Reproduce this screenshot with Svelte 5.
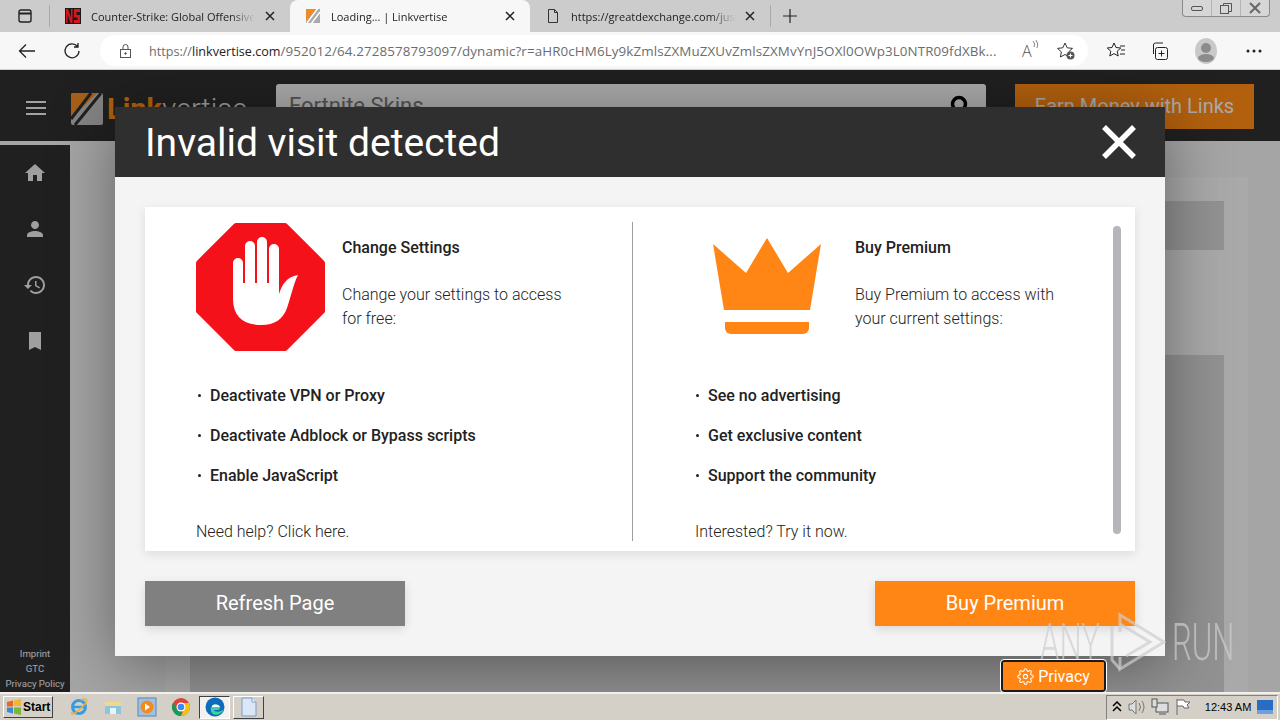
<script>
const tabs = [
  { title: 'Counter-Strike: Global Offensive', icon: 'ns' },
  { title: 'Loading... | Linkvertise', icon: 'lv', active: true },
  { title: 'https://greatdexchange.com/just-a-moment', icon: 'doc' }
];
const sideIcons = [
  'M10 20v-6h4v6h5v-8h3L12 3 2 12h3v8z',
  'M12 12c2.21 0 4-1.79 4-4s-1.79-4-4-4-4 1.79-4 4 1.79 4 4 4zm0 2c-2.67 0-8 1.34-8 4v2h16v-2c0-2.66-5.33-4-8-4z',
  'M13 3c-4.97 0-9 4.03-9 9H1l3.89 3.89.07.14L9 12H6c0-3.87 3.13-7 7-7s7 3.13 7 7-3.13 7-7 7c-1.93 0-3.68-.79-4.94-2.06l-1.42 1.42C8.27 19.99 10.51 21 13 21c4.97 0 9-4.03 9-9s-4.03-9-9-9zm-1 5v5l4.28 2.54.72-1.21-3.5-2.08V8H12z',
  'M6 3h12v18l-6-3-6 3z'
];
const leftItems = ['Deactivate VPN or Proxy', 'Deactivate Adblock or Bypass scripts', 'Enable JavaScript'];
const rightItems = ['See no advertising', 'Get exclusive content', 'Support the community'];
</script>

<div class="screen">
  <div class="tabstrip">
    <div class="winicon"><svg width="16" height="16" viewBox="0 0 16 16" fill="none" stroke="#222" stroke-width="1.4"><rect x="2" y="2" width="12" height="12" rx="2"/><path d="M2 5.5h12" stroke-width="2"/></svg></div>
    <div class="sep"></div>
    {#each tabs as tab}
      <div class="tab" class:active={tab.active}>
        {#if tab.icon === 'ns'}
          <svg class="favicon" width="16" height="16" viewBox="0 0 16 16"><rect width="16" height="16" fill="#1a1a1a"/><path d="M1 15V1h2l3 9V1h1.500v14H5.500L2.500 6v9zM9 1h6v3h-3.500v3H15v8H9v-3h3.500V9.500H9z" fill="#d8141c"/></svg>
        {:else if tab.icon === 'lv'}
          <svg class="favicon" width="16" height="16" viewBox="0 0 32 32"><rect x="2" y="2" width="28" height="28" fill="#a9a9a9"/><path d="M2 2h22L2 26z" fill="#f08a24"/><path d="M26 0L4 30M30 8L12 32" stroke="#fff" stroke-width="3"/></svg>
        {:else}
          <svg class="favicon" width="16" height="16" viewBox="0 0 16 16" fill="none" stroke="#333"><path d="M3.500 1.500h6l3 3v10h-9zM9.500 1.500v3h3"/></svg>
        {/if}
        <span class="tabtitle">{tab.title}</span>
        <svg class="tabclose" width="10" height="10" viewBox="0 0 10 10" stroke="#222" stroke-width="1.500"><path d="M1 1l8 8M9 1l-8 8"/></svg>
      </div>
    {/each}
    <div class="sep"></div>
    <svg class="plus" width="16" height="16" viewBox="0 0 16 16" stroke="#222" stroke-width="1.200"><path d="M8 1v14M1 8h14"/></svg>
    <div class="wincontrols">
      <span><svg width="14" height="10" viewBox="0 0 14 10" fill="none" stroke="#555"><rect x="1.500" y="3.500" width="11" height="4" rx="1.500"/></svg></span>
      <span><svg width="14" height="13" viewBox="0 0 14 13" fill="none" stroke="#555"><rect x="1.500" y="3.500" width="8" height="8"/><path d="M4.500 3.500v-2h8v8h-3"/></svg></span>
      <span><svg width="14" height="12" viewBox="0 0 14 12" stroke="#666" stroke-width="2"><path d="M2 1l10 10M12 1L2 11"/></svg></span>
    </div>
  </div>

  <div class="toolbar">
    <svg class="back" width="18" height="16" viewBox="0 0 18 16" fill="none" stroke="#222" stroke-width="1.300"><path d="M17 8H1.500M8 1.500L1.500 8 8 14.500"/></svg>
    <svg class="reload" width="18" height="18" viewBox="0 0 18 18" fill="none" stroke="#222" stroke-width="1.300"><path d="M14.500 4.500A7 7 0 1 0 16 9M15 1v4h-4"/></svg>
    <div class="address">
      <svg class="lock" width="13" height="16" viewBox="0 0 13 16" fill="none" stroke="#555"><rect x="1.500" y="6.500" width="10" height="8"/><path d="M4 6.500V4a2.500 2.500 0 0 1 5 0v2.500"/><circle cx="6.500" cy="10.500" r=".8" fill="#555"/></svg>
      <span class="url"><span class="urlhost">https://<b>linkvertise.com</b></span>/952012/64.2728578793097/dynamic?r=aHR0cHM6Ly9kZmlsZXMuZXUvZmlsZXMvYnJ5OXl0OWp3L0NTR09fdXBk...</span>
      <span class="readaloud">A<svg width="7" height="10" viewBox="0 0 7 10" fill="none" stroke="#666" stroke-width=".8"><path d="M1 1q3 3 1 6M4 0q3 4 1 8"/></svg></span>
      <svg class="addfav" width="20" height="20" viewBox="0 0 20 20"><path d="M9 2l2.200 4.800 5.300.6-3.900 3.500 1 5.100L9 13.500 4.400 16l1-5.100L1.500 7.400l5.300-.6z" fill="none" stroke="#333"/><circle cx="14.500" cy="14.500" r="4" fill="#555"/><path d="M14.500 12.500v4M12.500 14.500h4" stroke="#fff"/></svg>
    </div>
    <svg class="tool" style="margin-left:18px" width="20" height="20" viewBox="0 0 20 20" fill="none" stroke="#222"><path d="M8 2l2 4.500 4.800.5-3.600 3.200 1 4.800L8 12.600 3.800 15l1-4.800L1.200 7 6 6.500z"/><path d="M14 5h5M15 9h4M14 13h5"/></svg>
    <svg class="tool" style="margin-left:24px" width="20" height="20" viewBox="0 0 20 20" fill="none" stroke="#222"><rect x="5.500" y="6.500" width="12" height="12" rx="2"/><path d="M11.500 9.500v6M8.500 12.500h6M3.500 13V4a2 2 0 0 1 2-2H13"/></svg>
    <svg class="tool" style="margin-left:24px" width="24" height="26" viewBox="0 0 24 26"><ellipse cx="12" cy="13" rx="11" ry="13" fill="#c9c9c9"/><circle cx="12" cy="10" r="5" fill="#8c8c8c"/><ellipse cx="12" cy="20" rx="8" ry="4" fill="#8c8c8c"/></svg>
    <svg class="tool" style="margin-left:28px" width="16" height="4" viewBox="0 0 16 4" fill="#222"><circle cx="2" cy="2" r="1.500"/><circle cx="8" cy="2" r="1.500"/><circle cx="14" cy="2" r="1.500"/></svg>
  </div>

  <div class="page">
    <header class="site-header">
      <div class="burger"><i></i><i></i><i></i></div>
      <div class="logo">
        <svg width="32" height="32" viewBox="0 0 32 32"><rect width="32" height="32" rx="2" fill="#bdbdbd"/><path d="M2 0h24L0 26V2z" fill="#f08a24"/><path d="M30 0L4 32M20 0L0 26" stroke="#2e2e2e" stroke-width="3"/></svg>
        <span class="logotext"><b>Link</b>vertise</span>
      </div>
      <div class="search">
        <span>Fortnite Skins</span>
        <svg width="22" height="22" viewBox="0 0 22 22" fill="none" stroke="#000" stroke-width="3.500"><circle cx="11" cy="9" r="6.500"/></svg>
      </div>
      <div class="earn">Earn Money with Links</div>
    </header>
    <div class="site-body">
      <aside class="sidebar">
        <div class="sideicons">
          {#each sideIcons as d}
            <svg width="24" height="24" viewBox="0 0 24 24" fill="#e4e4e4"><path {d}/></svg>
          {/each}
        </div>
        <div class="sidelinks"><span>Imprint</span><span>GTC</span><span>Privacy Policy</span></div>
      </aside>
      <main class="panel">
        <div class="box small"></div>
        <div class="box large"></div>
      </main>
    </div>

    <div class="dim"></div>

    <div class="overlay">
      <div class="modal">
        <div class="modal-head">
          <h1>Invalid visit detected</h1>
          <svg width="34" height="34" viewBox="0 0 34 34" stroke="#fff" stroke-width="5.500"><path d="M2 2l30 30M32 2L2 32"/></svg>
        </div>
        <div class="modal-body">
          <div class="card">
            <section class="col left">
              <div class="top">
                <svg class="stop" width="130" height="130" viewBox="0 0 130 130">
                  <path d="M40 4h49l37 37v48l-37 37H40L3 89V41z" fill="#f4111a" stroke="#f4111a" stroke-width="6" stroke-linejoin="round"/>
                  <path d="M37 41a5 5 0 0 1 10 0v20h2V24a5 5 0 0 1 10 0v37h2V20a5 5 0 0 1 10 0v41h2V27a5 5 0 0 1 10 0v45c3-9 7-17 19-19-5 10-7 22-11 33-4 11-12 17-26 17-18 0-28-9-28-26z" fill="#fff"/>
                </svg>
                <div class="intro">
                  <h2>Change Settings</h2>
                  <p>Change your settings to access<br>for free:</p>
                </div>
              </div>
              <ul>
                {#each leftItems as item}<li>{item}</li>{/each}
              </ul>
              <p class="foot">Need help? Click here.</p>
            </section>
            <section class="col right">
              <div class="top">
                <div class="crownslot">
                  <svg width="110" height="97" viewBox="0 0 110 97" fill="#ff8514">
                    <path d="M1 6l33 29L55 0l21 35L109 6 98 72H12z"/>
                    <path d="M13 84h84v6a6 6 0 0 1-6 6H19a6 6 0 0 1-6-6z"/>
                  </svg>
                </div>
                <div class="intro">
                  <h2>Buy Premium</h2>
                  <p>Buy Premium to access with<br>your current settings:</p>
                </div>
              </div>
              <ul>
                {#each rightItems as item}<li>{item}</li>{/each}
              </ul>
              <p class="foot">Interested? Try it now.</p>
            </section>
            <div class="scrollthumb"></div>
          </div>
          <div class="actions">
            <button class="refresh">Refresh Page</button>
            <button class="buy">Buy Premium</button>
          </div>
        </div>
      </div>
    </div>

    <div class="watermark">
      <span class="any">ANY</span>
      <svg width="56" height="60" viewBox="0 0 56 60" fill="none" stroke="rgba(205,205,205,.7)" stroke-width="3"><path d="M2 14v28M10 20V3l44 27-44 27v-12"/><path d="M2 42v6l8 9M10 12l30 18-24 14"/></svg>
      <span class="run">RUN</span>
    </div>

    <button class="privacy">
      <svg width="17" height="17" viewBox="0 0 24 24" fill="none" stroke="#fff" stroke-width="1.500"><circle cx="12" cy="12" r="3"/><path d="M19.400 15a1.650 1.650 0 0 0 .33 1.820l.06.06a2 2 0 0 1 0 2.830 2 2 0 0 1-2.830 0l-.06-.06a1.650 1.650 0 0 0-1.820-.33 1.650 1.650 0 0 0-1 1.510V21a2 2 0 0 1-2 2 2 2 0 0 1-2-2v-.09A1.650 1.650 0 0 0 9 19.400a1.650 1.650 0 0 0-1.820.33l-.06.06a2 2 0 0 1-2.830 0 2 2 0 0 1 0-2.830l.06-.06a1.650 1.650 0 0 0 .33-1.820 1.650 1.650 0 0 0-1.510-1H3a2 2 0 0 1-2-2 2 2 0 0 1 2-2h.09A1.650 1.650 0 0 0 4.600 9a1.650 1.650 0 0 0-.33-1.820l-.06-.06a2 2 0 0 1 0-2.830 2 2 0 0 1 2.830 0l.06.06a1.650 1.650 0 0 0 1.820.33H9a1.650 1.650 0 0 0 1-1.510V3a2 2 0 0 1 2-2 2 2 0 0 1 2 2v.09a1.650 1.650 0 0 0 1 1.510 1.650 1.650 0 0 0 1.820-.33l.06-.06a2 2 0 0 1 2.830 0 2 2 0 0 1 0 2.830l-.06.06a1.650 1.650 0 0 0-.33 1.820V9a1.650 1.650 0 0 0 1.510 1H21a2 2 0 0 1 2 2 2 2 0 0 1-2 2h-.09a1.650 1.650 0 0 0-1.510 1z"/></svg>
      Privacy
    </button>
  </div>

  <footer class="taskbar">
    <div class="start">
      <svg width="16" height="16" viewBox="0 0 16 16"><path d="M1 3l6-1.500V7.500H1z" fill="#e8662a"/><path d="M8 1.500L15 0v7H8z" fill="#f2b632"/><path d="M1 8.500h6v6L1 13z" fill="#3c87d6"/><path d="M8 8.500h7V16l-7-1.500z" fill="#7cb53c"/></svg>
      Start
    </div>
    <div class="apps">
      <span class="app"><svg width="20" height="20" viewBox="0 0 20 20" fill="none"><circle cx="10" cy="10" r="6.500" stroke="#3a9bdc" stroke-width="3"/><path d="M4 10h12" stroke="#3a9bdc" stroke-width="2.500"/><path d="M3 15C1 19 6 18 17 6c2-4-1-5-5-3" stroke="#e9b23c" stroke-width="1.500"/></svg></span>
      <span class="app"><svg width="20" height="20" viewBox="0 0 20 20"><path d="M2 5h16v12H2z" fill="#f0d98a"/><path d="M2 9h16v8H2z" fill="#8cc6de"/><path d="M7 11h6v6H7z" fill="#e9f3f7"/></svg></span>
      <span class="app"><svg width="20" height="20" viewBox="0 0 20 20"><rect x="1" y="1" width="18" height="18" fill="#9dc1e4" stroke="#5a86b4"/><circle cx="10" cy="10" r="6.500" fill="#f28a1e"/><path d="M8 6.500l5 3.500-5 3.500z" fill="#fff"/></svg></span>
      <span class="app"><svg width="20" height="20" viewBox="0 0 20 20"><circle cx="10" cy="10" r="9" fill="#db4437"/><path d="M10 10L2.200 14.500A9 9 0 0 0 10 19z" fill="#0f9d58"/><path d="M10 6h8a9 9 0 0 1-8 13l4-9z" fill="#f4c20d"/><path d="M2.200 5.500L6 12 2.200 14.500A9 9 0 0 1 2.200 5.500z" fill="#0f9d58"/><circle cx="10" cy="10" r="4.500" fill="#fff"/><circle cx="10" cy="10" r="3.300" fill="#4285f4"/></svg></span>
      <span class="app pressed"><svg width="20" height="20" viewBox="0 0 20 20"><circle cx="10" cy="10" r="9.500" fill="#0f6cbd"/><path d="M19 12c-2 5-8 7-11 5-3-2-3-7 0-9 3-2 7 0 7 3 0 1-1 2-3 2h-3c0 2 6 3 10-1z" fill="#3fd0a4"/><path d="M7 9c2-2 6-2 8 1H7z" fill="#fff"/></svg></span>
      <span class="app raised"><svg width="18" height="20" viewBox="0 0 18 20"><path d="M2 1h10l4 4v14H2z" fill="#dbe7f7" stroke="#7f9dc4"/><path d="M12 1v4h4" fill="#fff" stroke="#7f9dc4"/></svg></span>
    </div>
    <div class="tray">
      <svg width="10" height="12" viewBox="0 0 10 12" fill="none" stroke="#000" stroke-width="1.500"><path d="M1 5l4-4 4 4M1 10l4-4 4 4"/></svg>
      <svg width="18" height="16" viewBox="0 0 18 16" fill="none" stroke="#777"><path d="M1 5h3l4-4v14l-4-4H1z" fill="#ddd"/><path d="M11 4q3 4 0 8M14 2q4 6 0 12"/></svg>
      <svg width="18" height="18" viewBox="0 0 18 18" fill="#ddd" stroke="#555"><rect x="5" y="5" width="12" height="9"/><rect x="1" y="1" width="5" height="8"/><path d="M8 16h7" /></svg>
      <svg width="16" height="18" viewBox="0 0 16 18" fill="#fff" stroke="#666"><path d="M2 1v16M2 2h7l1 2h5l-3 3 2 3H9L8 8H2"/></svg>
      <span class="clock">12:43 AM</span>
      <svg width="16" height="14" viewBox="0 0 16 14"><rect width="16" height="12" fill="#2a6cc4"/><rect y="10" width="16" height="4" fill="#6aa1de"/></svg>
    </div>
  </footer>
</div>

<style>
:global(body) {
  margin: 0;
  overflow: hidden;
}

.screen {
  width: 1280px;
  height: 720px;
  display: flex;
  flex-direction: column;
  font-family: Roboto, "Liberation Sans", sans-serif;
  overflow: hidden;
}

/* browser chrome */
.tabstrip {
  height: 32px;
  flex: none;
  display: flex;
  align-items: center;
  background: #cccccc;
  font-family: "Open Sans", "Liberation Sans", sans-serif;
  font-size: 11px;
  color: #222;
}

.winicon {
  width: 49px;
  display: flex;
  justify-content: center;
}

.sep {
  width: 1px;
  height: 22px;
  background: #a9a9a9;
}

.tab {
  width: 240px;
  height: 32px;
  box-sizing: border-box;
  display: flex;
  align-items: center;
  padding: 0 15px;
  gap: 10px;
}

.tab.active {
  background: #f7f7f7;
  border-radius: 8px 8px 0 0;
}

.favicon {
  flex: none;
}

.tabtitle {
  flex: 1;
  white-space: nowrap;
  overflow: hidden;
  mask-image: linear-gradient(to right, #000 85%, transparent);
}

.tabclose {
  flex: none;
}

.plus {
  margin-left: 11px;
}

.wincontrols {
  display: flex;
  align-self: flex-start;
  margin-left: auto;
  margin-right: 10px;
  height: 16px;
  border: 1px solid #8a8a8a;
  border-top: none;
  border-radius: 0 0 4px 4px;
  background: #d6d6d6;
}

.wincontrols span {
  width: 28px;
  display: flex;
  align-items: center;
  justify-content: center;
  border-right: 1px solid #b5b5b5;
}

.wincontrols span:last-child {
  border-right: none;
}

.toolbar {
  height: 38px;
  flex: none;
  display: flex;
  align-items: center;
  box-sizing: border-box;
  background: #f7f7f7;
  border-bottom: 1px solid #d0d0d0;
  padding-left: 18px;
}

.back {
  margin-right: 27px;
}

.reload {
  margin-right: 19px;
}

.address {
  width: 988px;
  height: 31px;
  box-sizing: border-box;
  flex: none;
  display: flex;
  align-items: center;
  background: #fff;
  border-radius: 16px;
  padding-left: 19px;
  color: #6d6d6d;
  font-family: "Open Sans", "Liberation Sans", sans-serif;
  font-size: 13.4px;
  letter-spacing: .1px;
}

.lock {
  margin-right: 17px;
}

.url {
  width: 854px;
  flex: none;
  white-space: nowrap;
  overflow: hidden;
}

.urlhost {
  font-size: 12.6px;
  letter-spacing: 0;
}

.urlhost b {
  font-weight: 400;
  color: #222;
}

.readaloud {
  margin-left: 19px;
  display: flex;
  font-size: 16px;
  font-weight: 300;
  color: #555;
}

.addfav {
  margin-left: 17px;
}

/* site underneath the modal */
.page {
  height: 622px;
  flex: none;
  position: relative;
  background: #ececec;
  overflow: hidden;
}

.site-header {
  height: 71px;
  box-sizing: border-box;
  display: flex;
  align-items: flex-start;
  background: #2f2f2f;
  padding: 14px 0 0 26px;
}

.burger {
  width: 20px;
  margin-top: 17px;
  display: flex;
  flex-direction: column;
  gap: 4px;
}

.burger i {
  height: 2px;
  background: #e8e8e8;
}

.logo {
  width: 205px;
  margin-left: 25px;
  margin-top: 8px;
  display: flex;
  align-items: center;
  gap: 4px;
}

.logotext {
  font-size: 29px;
  color: #e0e0e0;
  font-weight: 300;
}

.logotext b {
  color: #ff8a14;
  font-weight: 700;
}

.search {
  width: 710px;
  height: 45px;
  box-sizing: border-box;
  display: flex;
  justify-content: space-between;
  align-items: center;
  padding: 0 16px 2px 13px;
  background: #f4f4f4;
  border-radius: 3px 3px 0 0;
  font-size: 22px;
  color: #777;
}

.earn {
  width: 239px;
  height: 45px;
  box-sizing: border-box;
  padding-bottom: 2px;
  margin-left: 29px;
  display: flex;
  align-items: center;
  justify-content: center;
  background: #ff8a14;
  color: #f4f4f4;
  font-size: 20px;
}

.site-body {
  display: flex;
  height: 551px;
}

.sidebar {
  width: 70px;
  margin-top: 4px;
  flex: none;
  display: flex;
  flex-direction: column;
  justify-content: space-between;
  align-items: center;
  box-sizing: border-box;
  background: #2f2f2f;
  padding: 16px 0 1px;
}

.sideicons {
  display: flex;
  flex-direction: column;
  gap: 32px;
}

.sidelinks {
  display: flex;
  flex-direction: column;
  align-items: center;
  font-size: 9.6px;
  line-height: 15px;
  color: #eaeaea;
}

.panel {
  flex: 1;
  margin: 36px 32px 0 96px;
  padding: 24px;
  background: #f3f3f3;
}

.box {
  background: #d2d2d2;
}

.box.small {
  height: 49px;
}

.box.large {
  height: 340px;
  margin-top: 105px;
}

.dim {
  position: absolute;
  inset: 0;
  background: rgba(0, 0, 0, .3);
}

.overlay {
  position: absolute;
  inset: 37px 0 auto;
  display: flex;
  justify-content: center;
}

.modal {
  width: 1050px;
  box-shadow: 0 10px 60px rgba(0, 0, 0, .4);
}

.modal-head {
  height: 70px;
  display: flex;
  align-items: center;
  justify-content: space-between;
  box-sizing: border-box;
  padding: 0 29px 0 30px;
  background: #2f2f2f;
}

.modal-head h1 {
  margin: 2px 0 0;
  font-size: 39px;
  font-weight: 400;
  color: #fff;
}

.modal-body {
  background: #f4f4f4;
  padding: 30px;
}

.card {
  position: relative;
  height: 344px;
  box-sizing: border-box;
  display: grid;
  grid-template-columns: 488px 1fr;
  background: #fff;
  box-shadow: 0 3px 10px rgba(0, 0, 0, .1);
  padding: 15px 0 10px;
  color: #222;
  font-size: 16px;
}

.col {
  overflow: hidden;
}

.col.left {
  padding-left: 51px;
  border-right: 1px solid #9e9e9e;
}

.col.right {
  padding-left: 62px;
}

.top {
  display: flex;
  height: 130px;
}

.stop {
  margin-right: 16px;
  flex: none;
}

.crownslot {
  width: 160px;
  flex: none;
  padding: 16px 0 0 17px;
  box-sizing: border-box;
}

.intro {
  padding-top: 14px;
  line-height: 24px;
}

.intro h2 {
  margin: 0;
  font-size: 16px;
  font-weight: 500;
  line-height: 24px;
}

.intro p {
  margin: 23px 0 0;
  font-weight: 300;
}

ul {
  list-style: none;
  margin: 23px 0 0;
  padding: 0;
}

li {
  height: 40px;
  display: flex;
  align-items: center;
  gap: 9px;
  font-weight: 500;
  padding-left: 2px;
}

.col.right li {
  padding-left: 1px;
}

li::before {
  content: "";
  width: 3px;
  height: 3px;
  border-radius: 50%;
  background: #222;
}

.foot {
  margin: 25px 0 0;
  line-height: 24px;
  font-weight: 300;
}

.scrollthumb {
  position: absolute;
  top: 19px;
  right: 14px;
  width: 8px;
  height: 308px;
  border-radius: 4px;
  background: #b5b5bb;
}

.actions {
  display: flex;
  justify-content: space-between;
  margin-top: 30px;
}

.actions button {
  width: 260px;
  height: 45px;
  border: none;
  padding: 0 0 2px;
  color: #fff;
  font-family: inherit;
  font-size: 20px;
  box-shadow: 0 3px 10px rgba(0, 0, 0, .12);
}

.refresh {
  background: #808080;
}

.buy {
  background: #ff8514;
}

.watermark {
  position: absolute;
  left: 1040px;
  top: 542px;
  height: 60px;
  display: flex;
  align-items: center;
  font-size: 52px;
  font-weight: 300;
  color: rgba(205, 205, 205, .7);
}

.watermark span {
  display: block;
  width: 58px;
  transform: scaleX(.6);
  transform-origin: left center;
}

.watermark svg {
  margin-left: 12px;
  flex: none;
}

.watermark .run {
  margin-left: 6px;
}

.privacy {
  position: absolute;
  left: 1001px;
  top: 590px;
  width: 105px;
  height: 32px;
  box-sizing: border-box;
  display: flex;
  align-items: center;
  justify-content: center;
  gap: 4px;
  padding: 0;
  background: #ff8514;
  border: 2px solid #1a1a1a;
  border-radius: 3px;
  outline: 1px solid #fff;
  color: #fff;
  font-family: inherit;
  font-size: 16px;
}

/* windows taskbar */
.taskbar {
  height: 28px;
  flex: none;
  box-sizing: border-box;
  display: flex;
  align-items: center;
  background: #d4d0c8;
  border-top: 2px solid #f2f0ec;
  font-family: "Liberation Sans", sans-serif;
  font-size: 11px;
  color: #000;
}

.start {
  width: 50px;
  height: 22px;
  margin-left: 3px;
  box-sizing: border-box;
  display: flex;
  align-items: center;
  gap: 1px;
  padding-left: 2px;
  border: 1px solid;
  border-color: #fff #404040 #404040 #fff;
  font-weight: 700;
  font-size: 12px;
}

.apps {
  display: flex;
  margin-left: 10px;
  gap: 3px;
}

.app {
  width: 31px;
  height: 23px;
  display: flex;
  align-items: center;
  justify-content: center;
  box-sizing: border-box;
}

.app.pressed {
  background: #f4f2ee;
  border: 1px solid;
  border-color: #404040 #fff #fff #404040;
}

.app.raised {
  border: 1px solid;
  border-color: #fff #404040 #404040 #fff;
}

.tray {
  margin-left: auto;
  margin-right: 2px;
  width: 172px;
  height: 25px;
  box-sizing: border-box;
  display: flex;
  align-items: center;
  justify-content: space-between;
  padding: 0 4px 0 5px;
  border: 1px solid;
  border-color: #808080 #fff #fff #808080;
}

.clock {
  margin-left: 8px;
}
</style>
